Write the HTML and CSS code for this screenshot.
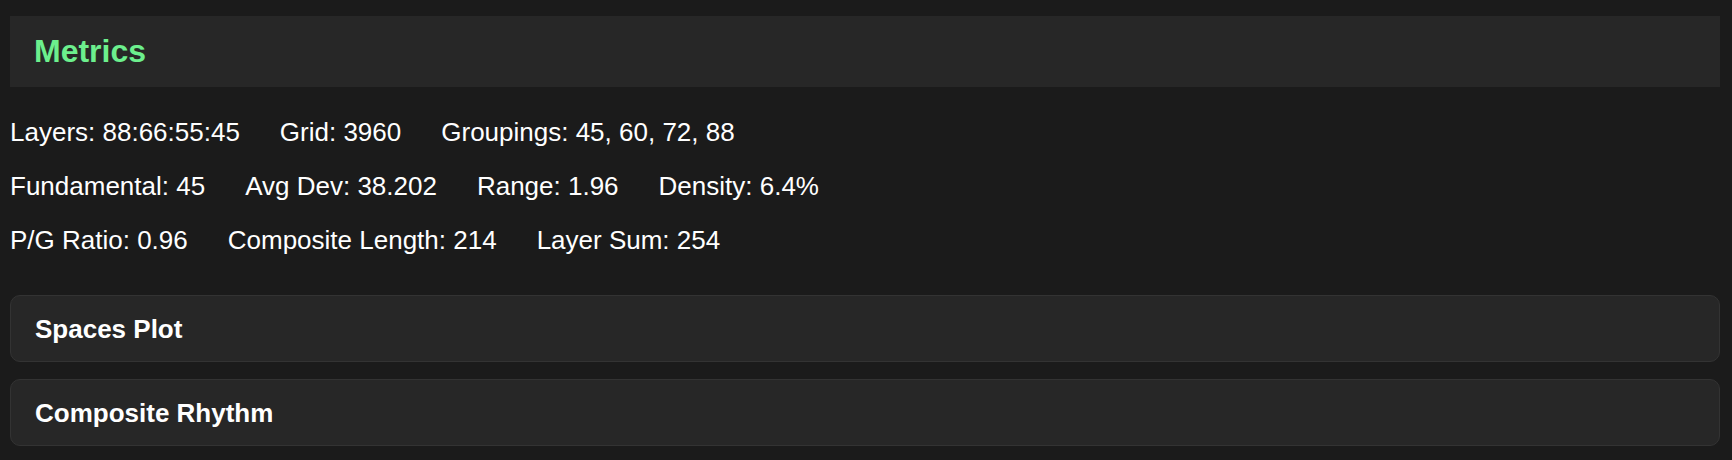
FILE: index.html
```html
<!DOCTYPE html>
<html lang="en">
<head>
<meta charset="utf-8">
<title>Metrics</title>
<link rel="stylesheet" href="styles.css">
</head>
<body>
<main class="page">
  <header class="panel-header">
    <h2 class="panel-title">Metrics</h2>
  </header>
  <section class="metrics">
    <div class="metric-row">
      <span class="metric">Layers: 88:66:55:45</span>
      <span class="metric">Grid: 3960</span>
      <span class="metric">Groupings: 45, 60, 72, 88</span>
    </div>
    <div class="metric-row">
      <span class="metric">Fundamental: 45</span>
      <span class="metric">Avg Dev: 38.202</span>
      <span class="metric">Range: 1.96</span>
      <span class="metric">Density: 6.4%</span>
    </div>
    <div class="metric-row">
      <span class="metric">P/G Ratio: 0.96</span>
      <span class="metric">Composite Length: 214</span>
      <span class="metric">Layer Sum: 254</span>
    </div>
  </section>
  <section class="sections">
    <details class="collapsible">
      <summary class="collapsible-title">Spaces Plot</summary>
    </details>
    <details class="collapsible">
      <summary class="collapsible-title">Composite Rhythm</summary>
    </details>
  </section>
</main>
</body>
</html>
```

FILE: styles.css
```css
html, body {
  margin: 0;
  padding: 0;
  background: #1b1b1b;
}

body {
  font-family: "Liberation Sans", Arial, Helvetica, sans-serif;
  color: #ffffff;
}

.page {
  padding: 16px 12px 0 10px;
  display: flex;
  flex-direction: column;
}

.panel-header {
  background: #272727;
  padding: 17px 24px;
}

.panel-title {
  margin: 0;
  font-size: 32px;
  line-height: 37px;
  font-weight: 700;
  color: #6cef8d;
}

.metrics {
  margin-top: 30px;
  display: flex;
  flex-direction: column;
  gap: 24px;
  font-size: 26px;
  line-height: 30px;
}

.metric-row {
  display: flex;
  gap: 40px;
}

.sections {
  margin-top: 40px;
  display: flex;
  flex-direction: column;
  gap: 17px;
}

.collapsible {
  background: #272727;
  border: 1px solid #333333;
  border-radius: 10px;
}

.collapsible-title {
  list-style: none;
  padding: 18px 24px 17px;
  font-size: 26px;
  line-height: 30px;
  font-weight: 700;
  cursor: pointer;
}

.collapsible-title::-webkit-details-marker {
  display: none;
}
```
